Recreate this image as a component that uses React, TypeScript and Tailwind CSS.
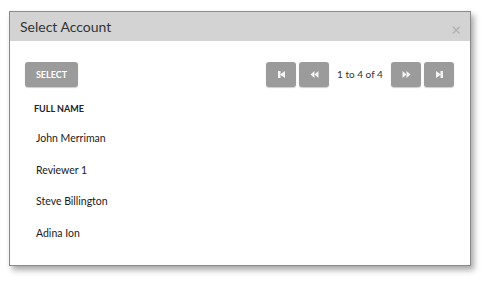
import React from 'react';

const names = ['John Merriman', 'Reviewer 1', 'Steve Billington', 'Adina Ion'];

const NavIcon: React.FC<{ kind: 'first' | 'prev' | 'next' | 'last' }> = ({ kind }) => {
  const flip = kind === 'next' || kind === 'last';
  return (
    <svg width="9" height="9" viewBox="0 0 9 9" className={flip ? '-scale-x-100' : ''}>
      {kind === 'first' || kind === 'last' ? (
        <>
          <rect x="1" y="1" width="2.5" height="7" fill="#f4f4f4" />
          <polygon points="8,1 3,4.5 8,8" fill="#f4f4f4" />
        </>
      ) : (
        <>
          <polygon points="4.5,1 0.5,4.5 4.5,8" fill="#f4f4f4" />
          <polygon points="8.5,1 4.5,4.5 8.5,8" fill="#f4f4f4" />
        </>
      )}
    </svg>
  );
};

const NavButton: React.FC<{ kind: 'first' | 'prev' | 'next' | 'last' }> = ({ kind }) => (
  <button className="w-[30px] h-[25px] rounded-[3px] bg-[#9b9b9b] flex items-center justify-center shadow-[0_1px_1px_rgba(0,0,0,0.2)]">
    <NavIcon kind={kind} />
  </button>
);

const App: React.FC = () => {
  return (
    <div className="w-[489px] h-[287px] bg-white pt-[11px] pl-[9px]" style={{ fontFamily: 'Lato, "Open Sans", sans-serif' }}>
      <div className="w-[462px] h-[255px] bg-white border border-[#8a8a8a] shadow-[3px_4px_6px_rgba(0,0,0,0.35)] flex flex-col">
        <div className="h-[29px] bg-[#d3d3d3] flex items-center justify-between pl-[10px] pr-[9px]">
          <span className="text-[14px] text-[#333]">Select Account</span>
          <span className="text-[17px] leading-none text-[#b0b0b0] mt-[6px]">×</span>
        </div>
        <div className="pt-[21px] pl-[15px] pr-[16px]">
          <div className="flex items-center justify-between">
            <button className="w-[53px] h-[25px] rounded-[3px] bg-[#9b9b9b] text-white text-[9px] font-bold shadow-[0_1px_1px_rgba(0,0,0,0.2)]">
              SELECT
            </button>
            <div className="flex items-center">
              <div className="flex gap-[3px]">
                <NavButton kind="first" />
                <NavButton kind="prev" />
              </div>
              <span className="text-[10px] text-[#333] w-[62px] text-center">1 to 4 of 4</span>
              <div className="flex gap-[3px]">
                <NavButton kind="next" />
                <NavButton kind="last" />
              </div>
            </div>
          </div>
          <div className="pl-[9px] mt-[15px] text-[9px] font-bold text-[#222] h-[14px] leading-[14px]">FULL NAME</div>
          <div className="mt-[15px] pl-[11px]">
            {names.map(n => (
              <div key={n} className="h-[31.5px] leading-[14px] text-[10.5px] text-[#1a1a1a]">
                {n}
              </div>
            ))}
          </div>
        </div>
      </div>
    </div>
  );
};

export default App;
